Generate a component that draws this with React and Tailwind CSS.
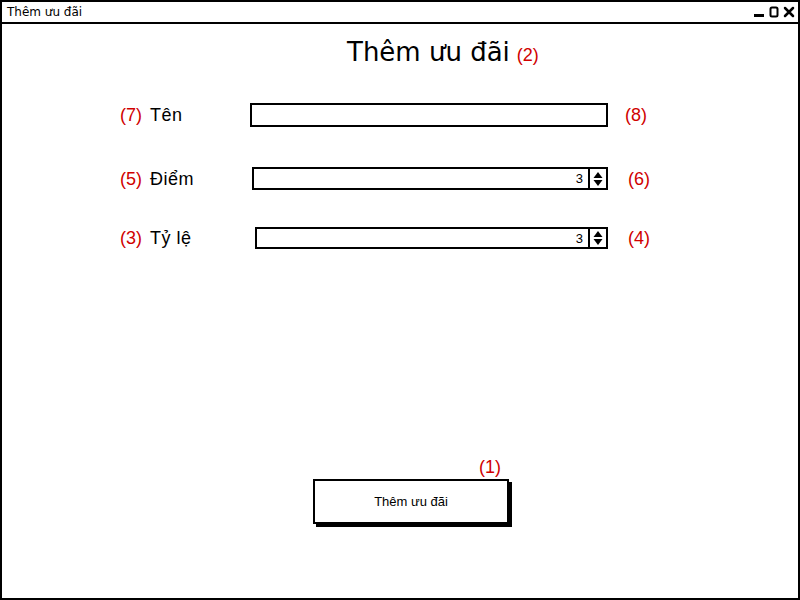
import React from 'react'

const Spinner = () => (
  <div className="h-full w-[18px] border-l-2 border-black flex items-center justify-center">
    <svg width="10" height="16" viewBox="0 0 10 16">
      <path d="M5 1 L9.5 7 L0.5 7 Z" fill="#000" />
      <path d="M5 15 L9.5 9 L0.5 9 Z" fill="#000" />
    </svg>
  </div>
)

const Row = ({ num, label, labelW, mt, h, inputW, right, rightMl, spinner }) => (
  <div className={`flex items-center ${h} ${mt}`}>
    <div className={`${labelW} pl-[118px] text-[18px] leading-none flex items-center`}>
      <span className="text-[#d00000]">{num}</span>
      <span className="ml-[8px] text-black tracking-[0.5px]">{label}</span>
    </div>
    <div className={`${inputW} h-full border-2 border-black bg-white flex items-center justify-end`}>
      {spinner && (
        <>
          <span className="text-[13px] leading-none mr-[5px] text-black">3</span>
          <Spinner />
        </>
      )}
    </div>
    <span className={`${rightMl} text-[18px] leading-none text-[#d00000]`}>{right}</span>
  </div>
)

export default function App() {
  return (
    <div className="w-[800px] h-[600px] bg-white border-2 border-black flex flex-col font-['Liberation_Sans',Arial,sans-serif]">
      {/* Title bar */}
      <div className="h-[22px] border-b-2 border-black flex items-center justify-between pl-[5px] pr-[3px]">
        <span className="text-[12px] text-black font-['DejaVu_Sans',sans-serif]">Thêm ưu đãi</span>
        <div className="flex items-center gap-[4px]">
          <svg width="12" height="12" viewBox="0 0 12 12">
            <rect x="1" y="8" width="10" height="3" fill="#000" />
          </svg>
          <svg width="10" height="12" viewBox="0 0 10 12">
            <rect x="1.5" y="1.5" width="7" height="9" rx="1.5" fill="none" stroke="#000" strokeWidth="2" />
          </svg>
          <svg width="12" height="12" viewBox="0 0 12 12">
            <path d="M2 2 L10 10 M10 2 L2 10" stroke="#000" strokeWidth="2.5" strokeLinecap="round" />
          </svg>
        </div>
      </div>

      <div className="flex-1 flex flex-col">
        <div className="mt-[13px] h-[30px] flex items-baseline pl-[345px]">
          <span className="text-[26px] leading-[30px] text-black font-['DejaVu_Sans',sans-serif]">Thêm ưu đãi</span>
          <span className="ml-[7px] text-[18px] text-[#d00000]">(2)</span>
        </div>

        <Row num="(7)" label="Tên" labelW="w-[248px]" mt="mt-[36px]" h="h-[24px]" inputW="w-[358px]" right="(8)" rightMl="ml-[17px]" />
        <Row num="(5)" label="Điểm" labelW="w-[250px]" mt="mt-[40px]" h="h-[23px]" inputW="w-[356px]" right="(6)" rightMl="ml-[20px]" spinner />
        <Row num="(3)" label="Tỷ lệ" labelW="w-[253px]" mt="mt-[37px]" h="h-[22px]" inputW="w-[353px]" right="(4)" rightMl="ml-[20px]" spinner />

        <div className="mt-[207px] h-[22px] pl-[477px] text-[18px] leading-[22px] text-[#d00000]">(1)</div>
        <div className="mt-[1px] pl-[311px]">
          <button className="w-[196px] h-[45px] border-2 border-black bg-white shadow-[3px_3px_0_#000] text-[13px] text-black">
            Thêm ưu đãi
          </button>
        </div>
      </div>
    </div>
  )
}
